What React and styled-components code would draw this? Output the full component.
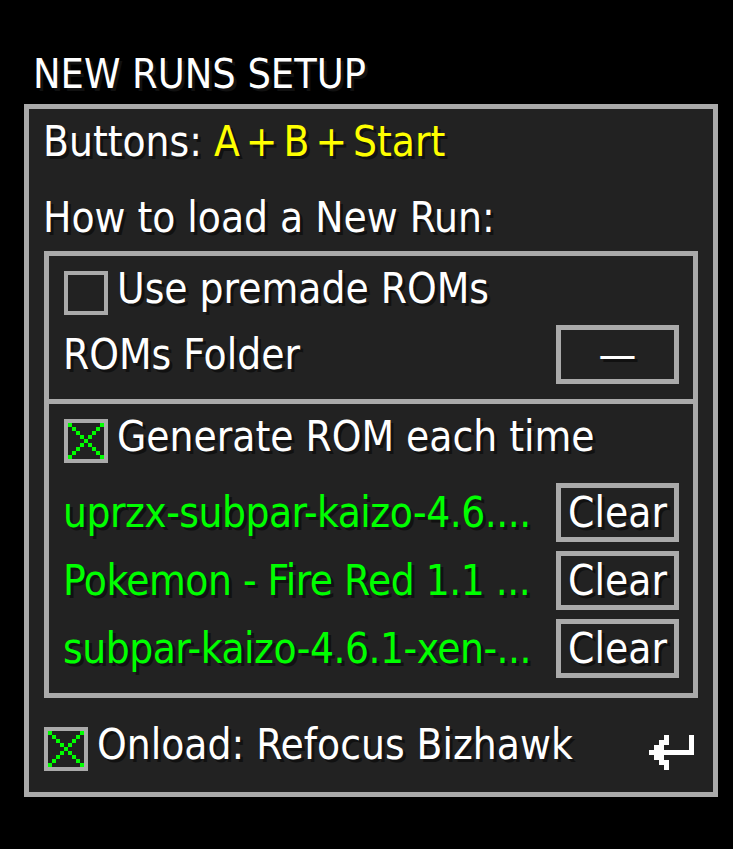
import React from 'react';
import styled, { createGlobalStyle } from 'styled-components';

const GlobalStyle = createGlobalStyle`
  html, body {
    margin: 0;
    padding: 0;
    background: #000;
  }
  body {
    font-family: "Liberation Sans Narrow", "DejaVu Sans Condensed", "Liberation Sans", sans-serif;
    color: #fff;
  }
`;

const Page = styled.div`
  width: 733px;
  height: 849px;
  padding: 54px 0 0 24px;
  box-sizing: border-box;
`;

const Title = styled.h1`
  margin: 0 0 10px 9px;
  height: 40px;
  font-size: 41px;
  line-height: 40px;
  font-weight: normal;
  text-shadow: 3px 3px 0 #111;
`;

const Panel = styled.div`
  width: 694px;
  box-sizing: border-box;
  border: 5px solid #aaa;
  background: #222;
  padding: 0 15px 21px 15px;
`;

const Line = styled.div`
  height: 40px;
  margin-top: ${(p) => p.top}px;
  margin-left: -1px;
  font-size: 42px;
  line-height: 40px;
  white-space: nowrap;
  text-shadow: 3px 3px 0 #111;
`;

const Yellow = styled.span`
  color: #ffff00;
  word-spacing: -6px;
`;

const Group = styled.div`
  margin-top: 13px;
  border: 5px solid #aaa;
`;

const Section = styled.div`
  display: flex;
  flex-direction: column;
  padding: 15px 14px 15px 15px;
  border-top: ${(p) => (p.divided ? '5px solid #aaa' : 'none')};
`;

const CheckRow = styled.label`
  display: flex;
  align-items: flex-start;
  gap: 9px;
  height: 44px;
`;

const Box = styled.span`
  flex: none;
  width: 44px;
  height: 44px;
  box-sizing: border-box;
  border: 4px solid #aaa;
  display: flex;
  background: #222;
`;

const CheckText = styled.span`
  font-size: 42px;
  line-height: 36px;
  white-space: nowrap;
  text-shadow: 3px 3px 0 #111;
`;

const FieldRow = styled.div`
  display: flex;
  align-items: center;
  justify-content: space-between;
  height: 59px;
  margin-top: ${(p) => p.top}px;
`;

const FieldText = styled.span`
  margin-left: -1px;
  font-size: 42px;
  line-height: 48px;
  white-space: nowrap;
  color: ${(p) => (p.green ? '#00ff00' : '#fff')};
  letter-spacing: ${(p) => (p.green ? '-0.5px' : '0')};
  text-shadow: 3px 3px 0 #111;
`;

const Button = styled.button`
  flex: none;
  width: 123px;
  height: 59px;
  box-sizing: border-box;
  border: 5px solid #aaa;
  background: #222;
  color: #fff;
  font-family: inherit;
  font-size: 42px;
  line-height: 40px;
  padding: 0;
  text-shadow: 3px 3px 0 #111;
`;

const Footer = styled.div`
  display: flex;
  align-items: flex-start;
  justify-content: space-between;
  margin-top: 29px;
  padding-right: 4px;
`;

const IconSlot = styled.span`
  display: flex;
  margin-top: 8px;
`;

const Check = ({ checked }) => (
  <Box>
    {checked ? (
      <svg width="36" height="36" viewBox="0 0 9 9" shapeRendering="crispEdges">
        {[0, 1, 2, 3, 4, 5, 6, 7, 8].map((i) => (
          <g key={i} fill="#00ff00">
            <rect x={i} y={i} width="1" height="1" />
            <rect x={8 - i} y={i} width="1" height="1" />
          </g>
        ))}
      </svg>
    ) : null}
  </Box>
);

const EnterIcon = () => {
  const cells = [
    [8, 0], [3, 0],
    [2, 1], [3, 1], [8, 1],
    [1, 2], [2, 2], [8, 2],
    [0, 3], [1, 3], [2, 3], [3, 3], [4, 3], [5, 3], [6, 3], [7, 3], [8, 3],
    [1, 4], [2, 4],
    [2, 5], [3, 5],
    [3, 6],
  ];
  return (
    <svg width="45" height="35" viewBox="0 0 9 7" shapeRendering="crispEdges">
      {cells.map(([x, y]) => (
        <rect key={x + '-' + y} x={x} y={y} width="1" height="1" fill="#fff" />
      ))}
    </svg>
  );
};

const roms = [
  'uprzx-subpar-kaizo-4.6....',
  'Pokemon - Fire Red 1.1 ...',
  'subpar-kaizo-4.6.1-xen-...',
];

export default function App() {
  return (
    <Page>
      <GlobalStyle />
      <Title>NEW RUNS SETUP</Title>
      <Panel>
        <Line top={13}>
          Buttons: <Yellow>A + B + Start</Yellow>
        </Line>
        <Line top={36}>How to load a New Run:</Line>
        <Group>
          <Section>
            <CheckRow>
              <Check />
              <CheckText>Use premade ROMs</CheckText>
            </CheckRow>
            <FieldRow top={10}>
              <FieldText>ROMs Folder</FieldText>
              <Button>—</Button>
            </FieldRow>
          </Section>
          <Section divided>
            <CheckRow>
              <Check checked />
              <CheckText>Generate ROM each time</CheckText>
            </CheckRow>
            {roms.map((r, i) => (
              <FieldRow key={r} top={i === 0 ? 20 : 9}>
                <FieldText green>{r}</FieldText>
                <Button>Clear</Button>
              </FieldRow>
            ))}
          </Section>
        </Group>
        <Footer>
          <CheckRow>
            <Check checked />
            <CheckText>Onload: Refocus Bizhawk</CheckText>
          </CheckRow>
          <IconSlot>
            <EnterIcon />
          </IconSlot>
        </Footer>
      </Panel>
    </Page>
  );
}
